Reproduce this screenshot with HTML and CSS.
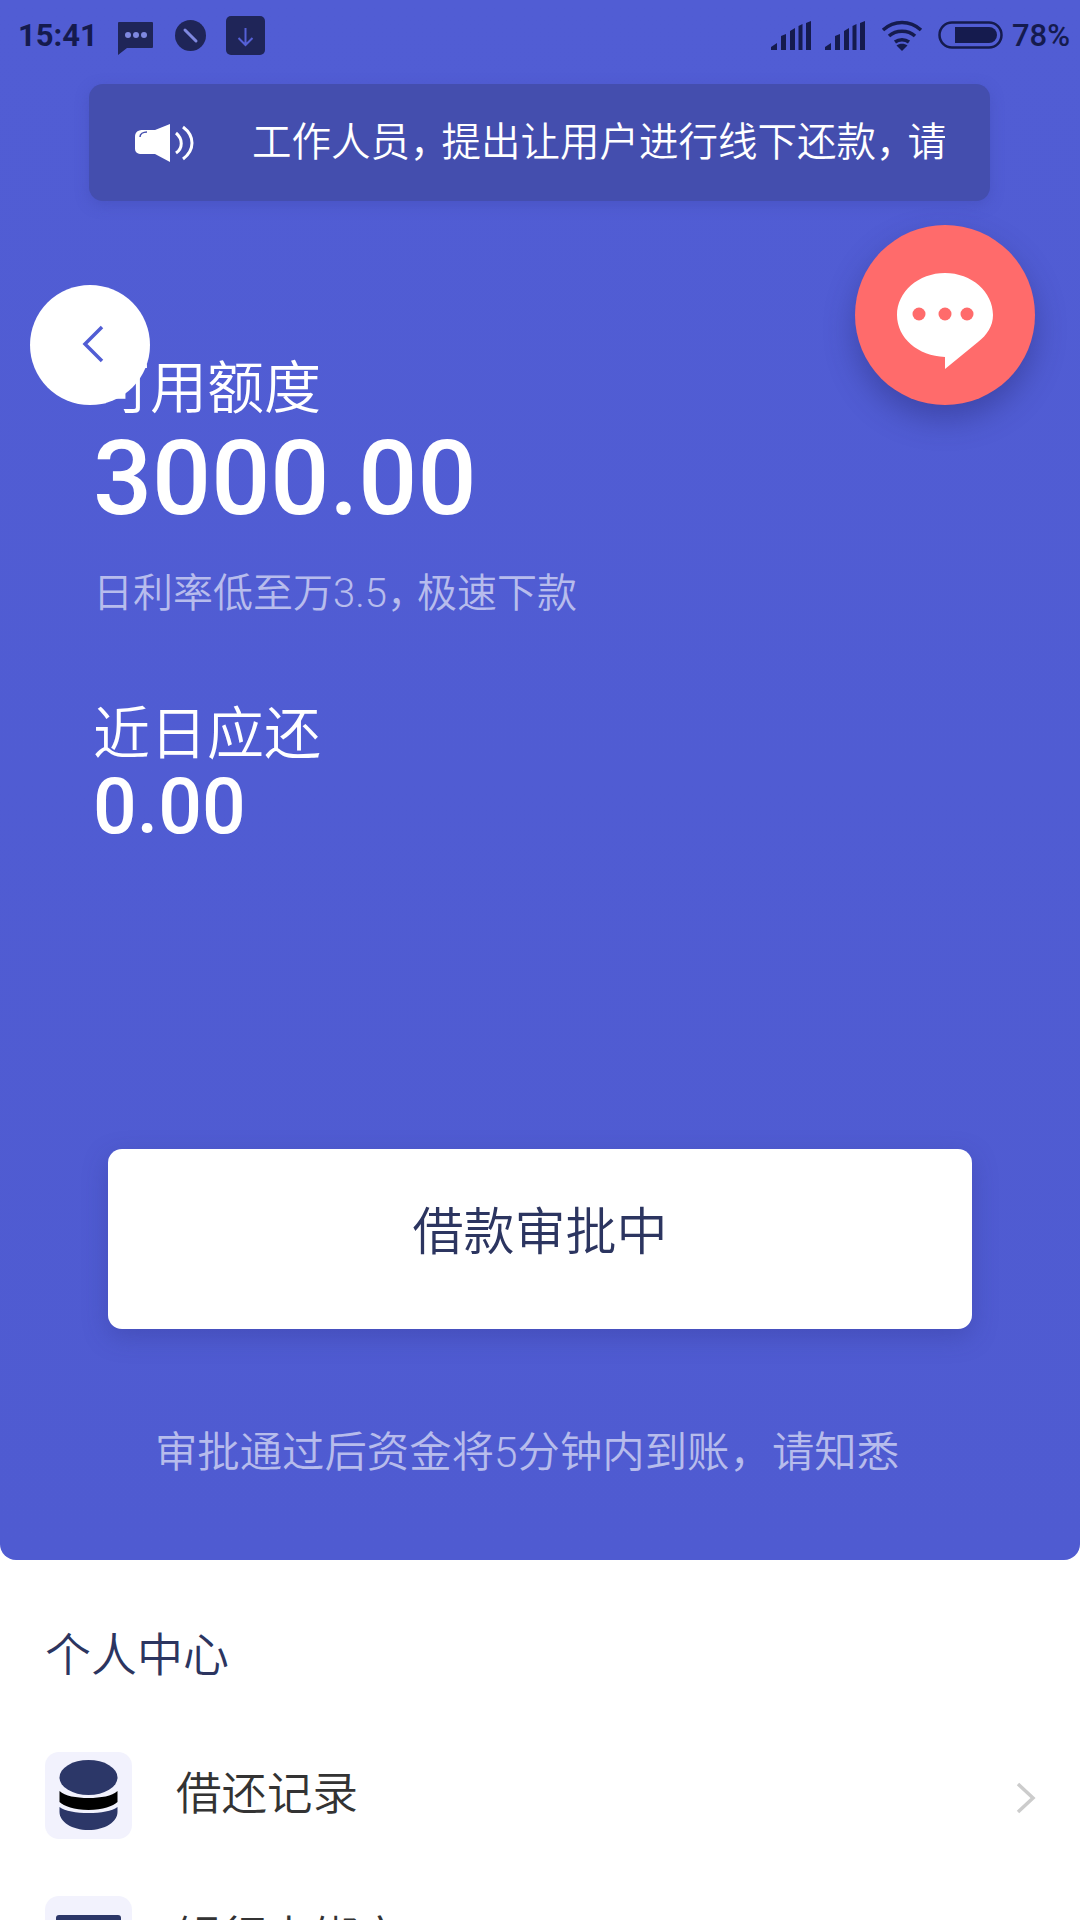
FILE: index.html
```html
<!DOCTYPE html>
<html lang="zh-CN">
<head>
  <meta charset="UTF-8">
  <meta name="viewport" content="width=device-width, initial-scale=1.0">
  <title>个人中心</title>
  <link rel="stylesheet" href="styles.css">
</head>
<body>
  <div class="page">
    <section class="panel">
      <div class="status-bar">
        <span class="status-time">15:41</span>
        <svg class="status-msg" width="35" height="33" viewBox="0 0 35 33"><path d="M1 0h33a1 1 0 0 1 1 1v24a1 1 0 0 1-1 1H9L0 33V1a1 1 0 0 1 1-1z" fill="#1f2558"/><circle cx="10" cy="13" r="3" fill="#7f88e0"/><circle cx="18" cy="13" r="3" fill="#7f88e0"/><circle cx="26" cy="13" r="3" fill="#7f88e0"/></svg>
        <svg class="status-block" width="31" height="31" viewBox="0 0 31 31"><circle cx="15.500" cy="15.500" r="15.500" fill="#1f2558"/><path d="M10 10l11 11" stroke="#7f88e0" stroke-width="3" stroke-linecap="round"/></svg>
        <svg class="status-down" width="39" height="39" viewBox="0 0 39 39"><rect width="39" height="39" rx="5" fill="#1f2558"/><path d="M19.500 12v17M12.500 22l7 7 7-7" fill="none" stroke="#5560d6" stroke-width="2"/></svg>
        <span class="status-spacer"></span>
        <svg class="status-signal" width="40" height="29" viewBox="0 0 40 29"><path d="M0 29v-3l6-4v7zM10 29V15l5-2v16zM19 29V10l5-3v22zM27.500 29V5l4-2v26zM35 29V2l5-2v29z" fill="#151b4e"/></svg>
        <svg class="status-signal signal-last" width="40" height="29" viewBox="0 0 40 29"><path d="M0 29v-3l6-4v7zM10 29V15l5-2v16zM19 29V10l5-3v22zM27.500 29V5l4-2v26zM35 29V2l5-2v29z" fill="#151b4e"/></svg>
        <svg class="status-wifi" width="42" height="31" viewBox="0 0 42 31"><g fill="none" stroke="#151b4e" stroke-width="3.500"><path d="M2 10c11-10 27-10 38 0"/><path d="M8 16c7-6.500 19-6.500 26 0"/><path d="M14 22c4-3 10-3 14 0"/></g><path d="M21 31l-5.500-5.500c3-2.500 8-2.500 11 0z" fill="#151b4e"/></svg>
        <svg class="status-battery" width="65" height="28" viewBox="0 0 65 28"><rect x="1.500" y="1.500" width="62" height="25" rx="12.500" fill="none" stroke="#151b4e" stroke-width="2.500"/><path d="M17 6h34a8 8 0 0 1 0 16H17z" fill="#151b4e"/></svg>
        <span class="status-pct">78%</span>
      </div>

      <div class="notice">
        <svg class="notice-icon" width="60" height="38" viewBox="0 0 60 38"><path d="M35 0v38L20 30H5a5 5 0 0 1-5-5V13C0 7 4 6 8 6h12z" fill="#fff"/><path d="M5 13c0-3 3-5 7-5" fill="none" stroke="#444eae" stroke-width="1.500"/><path d="M41 9c7 6 7 15 0 20M48 3c12 9 12 23 0 32" fill="none" stroke="#fff" stroke-width="3"/></svg>
        <div class="notice-clip">
          <span class="notice-text">工作人员<span class="comma">，</span>提出让用户进行线下还款<span class="comma">，</span>请</span>
        </div>
      </div>

      <button class="back-btn" type="button">
        <svg width="22" height="38" viewBox="0 0 22 38"><path d="M20 2L3 19l17 17" fill="none" stroke="#515dd4" stroke-width="3.500"/></svg>
      </button>

      <button class="chat-btn" type="button">
        <svg width="96" height="96" viewBox="0 0 96 96"><path d="M48 0c26.500 0 48 18.800 48 42 0 11-6 20-15 27L48 96V84C21 83 0 65 0 42 0 18.800 21.500 0 48 0z" fill="#fff"/><circle cx="22" cy="41" r="6.500" fill="#ff6b6b"/><circle cx="48" cy="41" r="6.500" fill="#ff6b6b"/><circle cx="70" cy="41" r="6.500" fill="#ff6b6b"/></svg>
      </button>

      <div class="quota">
        <div class="quota-label">可用额度</div>
        <div class="quota-amount">3000.00</div>
        <div class="quota-sub">日利率低至万3.5<span class="comma sub-comma">，</span>极速下款</div>
        <div class="quota-label due-label">近日应还</div>
        <div class="due-amount">0.00</div>
      </div>

      <button class="apply-btn" type="button">借款审批中</button>
      <div class="apply-note">审批通过后资金将5分钟内到账，请知悉</div>
    </section>

    <section class="center">
      <h2 class="center-title">个人中心</h2>
      <div class="center-row">
        <span class="row-icon">
          <svg width="87" height="87" viewBox="0 0 87 87"><ellipse cx="43.500" cy="25.500" rx="29" ry="17.500" fill="#2c3768"/><path d="M14.500 39C20 44 31 46 43.500 46S67 44 72.500 39v11C68 54 58 58 43.500 58S19 54 14.500 50z" fill="#000"/><path d="M14.500 55C20 59 31 61 43.500 61S67 59 72.500 55v5C72.500 70 60 78 43.500 78S14.500 70 14.500 60z" fill="#2c3768"/></svg>
        </span>
        <span class="row-label">借还记录</span>
        <svg class="row-arrow" width="20" height="32" viewBox="0 0 20 32"><path d="M2 2l15 14L2 30" fill="none" stroke="#cccccc" stroke-width="3.500"/></svg>
      </div>
      <div class="center-row">
        <span class="row-icon">
          <svg width="87" height="87" viewBox="0 0 87 87"><rect x="11" y="19" width="65" height="50" rx="3" fill="#2c3768"/><rect x="11" y="30" width="65" height="8" fill="#000"/></svg>
        </span>
        <span class="row-label">银行卡绑定</span>
        <svg class="row-arrow" width="20" height="32" viewBox="0 0 20 32"><path d="M2 2l15 14L2 30" fill="none" stroke="#cccccc" stroke-width="3.500"/></svg>
      </div>
    </section>
  </div>
</body>
</html>
```

FILE: styles.css
```css
html, body {
  margin: 0;
  padding: 0;
  background-color: #fff;
}
body {
  font-family: Roboto, "Noto Sans CJK SC", sans-serif;
}
.page {
  width: 1080px;
  height: 1920px;
  overflow: hidden;
}
.panel {
  position: relative;
  height: 1560px;
  background: linear-gradient(#515dd4, #4f5bd1);
  border-radius: 0 0 16px 16px;
  overflow: hidden;
}

/* status bar */
.status-bar {
  display: flex;
  align-items: center;
  height: 70px;
  padding: 0 10px 0 18px;
  color: #151b4e;
}
.status-time {
  font-size: 31px;
  font-weight: 700;
  width: 100px;
}
.status-msg {
  margin-top: 7px;
}
.status-block {
  margin: 0 20px 0 22px;
}
.status-down {
  margin-top: 1px;
}
.status-spacer {
  flex: 1;
}
.status-signal {
  margin-right: 14px;
}
.signal-last {
  margin-right: 16px;
}
.status-wifi {
  margin: 1px 15px 0 0;
}
.status-battery {
  margin-right: 9px;
}
.status-pct {
  font-size: 31px;
  font-weight: 500;
}

/* notice */
.notice {
  display: flex;
  align-items: center;
  width: 901px;
  height: 117px;
  margin: 14px 0 0 89px;
  padding-left: 46px;
  box-sizing: border-box;
  background-color: #444eae;
  border-radius: 14px;
  box-shadow: 0 4px 14px rgba(60, 70, 170, 0.35);
}
.notice-icon {
  flex: none;
  margin-right: 57px;
}
.notice-clip {
  width: 693px;
  overflow: hidden;
  white-space: nowrap;
}
.notice-text {
  font-size: 39.500px;
  line-height: 50px;
  font-weight: 350;
  color: #fff;
}
.comma {
  letter-spacing: -8px;
}
.sub-comma {
  letter-spacing: -10px;
}

/* floating buttons */
.back-btn,
.chat-btn {
  position: absolute;
  display: flex;
  align-items: center;
  justify-content: center;
  padding: 0;
  border: none;
  border-radius: 50%;
}
.back-btn {
  left: 30px;
  top: 285px;
  width: 120px;
  height: 120px;
  background-color: #fff;
  padding-left: 5px;
  padding-bottom: 2px;
}
.chat-btn {
  left: 855px;
  top: 225px;
  width: 180px;
  height: 180px;
  background-color: #ff6b6b;
  padding-top: 12px;
  box-shadow: 0 14px 30px rgba(40, 45, 120, 0.45);
}

/* quota */
.quota {
  margin-top: 156px;
  padding-left: 93px;
  color: #fff;
}
.quota-label {
  font-size: 57px;
  line-height: 64px;
  font-weight: 350;
}
.quota-amount {
  font-size: 104px;
  line-height: 116px;
  font-weight: 500;
}
.quota-sub {
  margin-top: 32px;
  font-size: 40px;
  line-height: 50px;
  font-weight: 350;
  color: rgba(255, 255, 255, 0.6);
}
.due-label {
  margin-top: 84px;
}
.due-amount {
  margin-top: -3px;
  font-size: 77px;
  line-height: 86px;
  font-weight: 500;
}

/* apply */
.apply-btn {
  display: block;
  width: 864px;
  height: 180px;
  margin: 299px 0 0 108px;
  padding: 0 0 22px;
  border: none;
  border-radius: 14px;
  background-color: #fff;
  color: #2c3560;
  font-family: inherit;
  font-size: 51px;
  font-weight: 350;
  box-shadow: 0 8px 24px rgba(50, 55, 140, 0.35);
}
.apply-note {
  margin-top: 96px;
  padding-right: 26px;
  text-align: center;
  font-size: 42.400px;
  line-height: 56px;
  font-weight: 350;
  color: rgba(255, 255, 255, 0.6);
}

/* personal center */
.center {
  padding: 65px 0 0 45px;
}
.center-title {
  margin: 0 0 67px;
  font-size: 46px;
  line-height: 60px;
  font-weight: 350;
  color: #2c3560;
}
.center-row {
  display: flex;
  align-items: center;
  height: 87px;
  margin-bottom: 57px;
  padding-right: 44px;
}
.row-icon {
  flex: none;
  width: 87px;
  height: 87px;
  margin-right: 44px;
  background-color: #f2f2fd;
  border-radius: 14px;
  overflow: hidden;
}
.row-icon svg {
  display: block;
}
.row-label {
  flex: 1;
  padding-bottom: 12px;
  font-size: 45.500px;
  font-weight: 350;
  color: #333;
}
.row-arrow {
  flex: none;
  margin-top: 4px;
}
```
